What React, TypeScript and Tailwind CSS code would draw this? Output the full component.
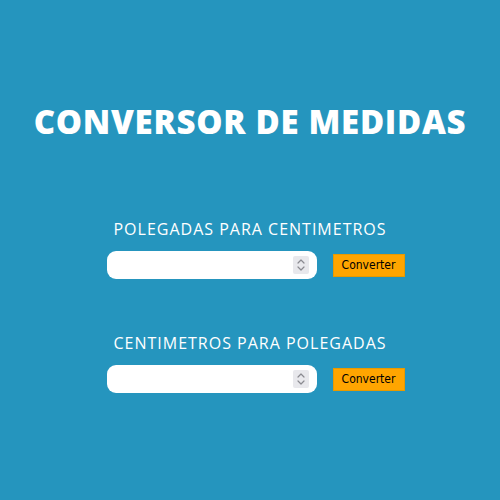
import React from "react";

function Spinner() {
  return (
    <div className="flex h-[18px] w-[16px] flex-col items-center justify-center rounded-[2px] bg-[#e8e8ec]">
      <svg width="10" height="16" viewBox="0 0 10 16" fill="none" stroke="#8a8a90" strokeWidth="1.2" strokeLinecap="round" strokeLinejoin="round">
        <path d="M2 6 L5 3 L8 6" />
        <path d="M2 10 L5 13 L8 10" />
      </svg>
    </div>
  );
}

function Row({ label }: { label: string }) {
  return (
    <div className="flex flex-col items-center">
      <div className="text-[16px] leading-[20px] tracking-[1px] text-white" style={{ fontFamily: '"Open Sans", sans-serif' }}>
        {label}
      </div>
      <div className="mt-[12px] flex items-center pl-[11px]">
        <div className="flex h-[28px] w-[210px] items-center justify-end rounded-[9px] bg-white pr-[8px]">
          <Spinner />
        </div>
        <button
          className="ml-[16px] h-[23px] w-[72px] border border-[#e89a00] bg-[#ffa500] text-[12px] text-black"
          style={{ fontFamily: '"DejaVu Sans Condensed", "DejaVu Sans", sans-serif' }}
        >
          Converter
        </button>
      </div>
    </div>
  );
}

export default function App() {
  return (
    <div className="flex h-[500px] w-[500px] flex-col items-center bg-[#2595be]">
      <h1
        className="mt-[100px] text-[33px] font-extrabold leading-[44px] tracking-[0.7px] text-white"
        style={{ fontFamily: '"Open Sans", sans-serif' }}
      >
        CONVERSOR DE MEDIDAS
      </h1>
      <div className="mt-[75px]">
        <Row label="POLEGADAS PARA CENTIMETROS" />
      </div>
      <div className="mt-[54px]">
        <Row label="CENTIMETROS PARA POLEGADAS" />
      </div>
    </div>
  );
}
